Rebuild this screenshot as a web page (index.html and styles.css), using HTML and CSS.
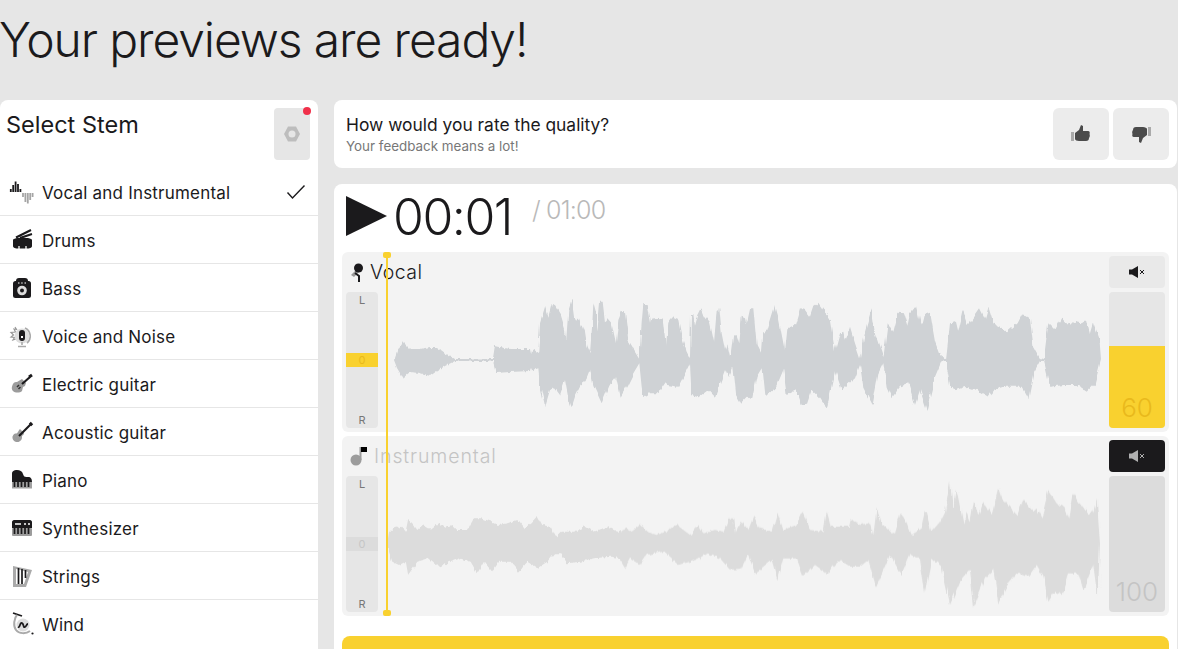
FILE: index.html
```html
<!DOCTYPE html>
<html lang="en">
<head>
    <meta charset="UTF-8">
    <meta name="viewport" content="width=device-width, initial-scale=1.0">
    <title>Your previews are ready!</title>
    <link rel="stylesheet" href="styles.css">
</head>
<body>
    <h1>Your previews are ready!</h1>

    <div class="layout">
        <div class="sidebar">
            <div class="sidebar-head">
                <h2>Select Stem</h2>
                <button class="nut-btn">
                    <svg width="18" height="18" viewBox="0 0 18 18"><path d="M5 1.500h8l4 7.500-4 7.500h-8l-4-7.500z" fill="#bdbdbd"/><circle cx="9" cy="9" r="3.500" fill="#e6e6e6"/></svg>
                    <span class="dot"></span>
                </button>
            </div>

            <ul class="stems">
                <li>
                    <svg class="stem-icon" viewBox="0 0 26 26"><path d="M2.800 13v-3M5.200 13V6M7.600 13V2.500M10 13V5M12.400 13v-3" stroke="#1b1a1c" stroke-width="1.800"/><path d="M15 14v4M17.400 14v9M19.800 14v10.500M22.200 14v7M24.600 14v4" stroke="#a5a5a5" stroke-width="1.800"/></svg>
                    <span>Vocal and Instrumental</span>
                    <svg class="check" width="20" height="16" viewBox="0 0 20 16"><path d="M1.500 8.500l5 5.500L18.500 1.500" fill="none" stroke="#1b1a1c" stroke-width="1.400"/></svg>
                </li>
                <li>
                    <svg class="stem-icon" viewBox="0 0 26 26"><path d="M5 13c0-3 19-3 19 0v6c0 2-3 2.500-5 2.500V19h-2v2.500h-5V19h-2v2.500c-2 0-5-.5-5-2.500z" fill="#1b1a1c"/><path d="M8 10.500L23 3M12 11L24 7" stroke="#1b1a1c" stroke-width="2"/><path d="M10 21.500V19h2v2.500zM17 21.500V19h2v2.500z" fill="#aaa"/></svg>
                    <span>Drums</span>
                </li>
                <li>
                    <svg class="stem-icon" viewBox="0 0 26 26"><rect x="5" y="6" width="18" height="17" rx="2.500" fill="#1b1a1c"/><path d="M8 6c0-2 1-3 3-3h6c2 0 3 1 3 3z" fill="#1b1a1c"/><path d="M10 8h1.500M13.200 8h1.500M16.500 8h1.500" stroke="#fff" stroke-width="1"/><circle cx="14" cy="15.500" r="4.800" fill="#ddd"/><circle cx="14" cy="15.500" r="2" fill="#1b1a1c"/></svg>
                    <span>Bass</span>
                </li>
                <li>
                    <svg class="stem-icon" viewBox="0 0 26 26"><path d="M7 4l1.500 2.500L6 6l1.500 3L3 9.500l2.500 2.500L3 14l3.500.500L5 17l3-1" fill="none" stroke="#999" stroke-width="1.200"/><path d="M17 5a9 9 0 0 1 2 15" fill="none" stroke="#aaa" stroke-width="1.800"/><circle cx="14" cy="13" r="7.500" fill="#dedede"/><rect x="11" y="7" width="6" height="11" rx="3" fill="#1b1a1c"/><rect x="13" y="13" width="2" height="2" fill="#fff"/><path d="M14 19v3M10 23.500h8" stroke="#aaa" stroke-width="1.600"/></svg>
                    <span>Voice and Noise</span>
                </li>
                <li>
                    <svg class="stem-icon" viewBox="0 0 26 26"><path d="M14 8l4 4-1 3-2 1-1 4c-2 2-7 2-9 0s-1-5 0-7 3-2 4-2z" fill="#9c9c9c"/><path d="M14 13L22 6" stroke="#1b1a1c" stroke-width="2.200"/><path d="M21 6l3-2" stroke="#1b1a1c" stroke-width="3"/><path d="M9 16l2-2M10.500 18l2-2" stroke="#333" stroke-width="1.500"/></svg>
                    <span>Electric guitar</span>
                </li>
                <li>
                    <svg class="stem-icon" viewBox="0 0 26 26"><path d="M12 10l4 4c0 2-1.500 2-2 3 .500 3-1 5-3.500 6-3.500.500-6.500-2-6-5.500 1-2.500 2-3 4-3 2-1 2-3.500 3.500-4.500z" fill="#9c9c9c"/><path d="M11 17L23 5" stroke="#1b1a1c" stroke-width="2.200"/><path d="M22 6l2-2" stroke="#1b1a1c" stroke-width="3.400"/></svg>
                    <span>Acoustic guitar</span>
                </li>
                <li>
                    <svg class="stem-icon" viewBox="0 0 26 26"><path d="M4 15V7c0-3 2-4 5-4s5 1 6 4 2 3 5 3 4 2 4 5z" fill="#1b1a1c"/><rect x="4" y="15" width="20" height="6.500" fill="#a0a0a0"/><path d="M6.500 15v5M10 15v5M13.500 15v5M17 15v5M20.500 15v5" stroke="#1b1a1c" stroke-width="1.700"/></svg>
                    <span>Piano</span>
                </li>
                <li>
                    <svg class="stem-icon" viewBox="0 0 26 26"><path d="M4 7c0-1 1-2 2-2h16c1 0 2 1 2 2v6H4z" fill="#1b1a1c"/><path d="M7 9h6M16 9h2M20 9h2" stroke="#fff" stroke-width="1.400"/><rect x="4" y="13" width="20" height="8" rx="1" fill="#9c9c9c"/><path d="M6.500 13v6M10 13v6M13.500 13v6M17 13v6M20.500 13v6" stroke="#1b1a1c" stroke-width="1.700"/></svg>
                    <span>Synthesizer</span>
                </li>
                <li>
                    <svg class="stem-icon" viewBox="0 0 26 26"><path d="M5 3l19 4-6 17H5zM8 6v15h8l4-12z" fill="#aaa" fill-rule="evenodd"/><path d="M10.500 5v16M14 6v15M17.500 7v8" stroke="#1b1a1c" stroke-width="1.700"/></svg>
                    <span>Strings</span>
                </li>
                <li>
                    <svg class="stem-icon" viewBox="0 0 26 26"><path d="M5 2l9 3" stroke="#1b1a1c" stroke-width="1.800"/><path d="M9 4c-3 3-4 11-1 15s10 4 14 1" fill="none" stroke="#aaa" stroke-width="2"/><circle cx="15" cy="14" r="6.500" fill="#ddd"/><path d="M10 16c2 1 2-5 4-4s1 5 3 4 1-3 3-3" fill="none" stroke="#1b1a1c" stroke-width="1.800"/><circle cx="24.500" cy="22.500" r="1.100" fill="#1b1a1c"/></svg>
                    <span>Wind</span>
                </li>
            </ul>
        </div>

        <div class="main">
            <div class="rating card">
                <div class="rating-text">
                    <p class="rating-title">How would you rate the quality?</p>
                    <p class="rating-sub">Your feedback means a lot!</p>
                </div>
                <button class="thumb-btn">
                    <svg width="20" height="18" viewBox="0 0 20 18"><rect x="0" y="7" width="3" height="9" fill="#aaa"/><path d="M4 8l4-3 2-5 2 1v5h5c2 0 2 2 1.500 3 .500 1 .500 3-.500 4 0 2-1 3-3 3H8c-2 0-4-1-4-2z" fill="#4b4b4b"/></svg>
                </button>
                <button class="thumb-btn">
                    <svg class="flip" width="20" height="18" viewBox="0 0 20 18"><rect x="0" y="7" width="3" height="9" fill="#aaa"/><path d="M4 8l4-3 2-5 2 1v5h5c2 0 2 2 1.500 3 .500 1 .500 3-.500 4 0 2-1 3-3 3H8c-2 0-4-1-4-2z" fill="#4b4b4b"/></svg>
                </button>
            </div>

            <div class="player card">
                <div class="transport">
                    <svg width="41" height="40" viewBox="0 0 41 40"><path d="M0 0l41 20L0 40z" fill="#1b1a1c"/></svg>
                    <span class="time">00:01</span>
                    <span class="total">/ 01:00</span>
                </div>

                <div class="tracks">
                    <div class="track">
                        <div class="track-title">
                            <svg width="16" height="20" viewBox="0 0 16 20"><path d="M1 13l5-5 3 2-5 5z" fill="#999"/><circle cx="8.500" cy="6" r="4.500" fill="#1b1a1c"/><path d="M5 11l4 3v6" fill="none" stroke="#1b1a1c" stroke-width="2"/></svg>
                            <span>Vocal</span>
                        </div>
                        <button class="mute-btn">
                            <svg width="16" height="12" viewBox="0 0 16 12"><path d="M0 3.500h3L9 0v12L3 8.500H0z" fill="#1b1a1c"/><path d="M11 4l4 4M15 4l-4 4" stroke="#1b1a1c" stroke-width="1"/></svg>
                        </button>
                        <div class="pan">
                            <span>L</span>
                            <span class="pan-zero">0</span>
                            <span>R</span>
                        </div>
                        <svg class="wave" width="731" height="136" viewBox="378 292 731 136">
                            <defs>
                                <filter id="rough" x="-2%" y="-5%" width="104%" height="110%">
                                    <feTurbulence type="fractalNoise" baseFrequency="0.35 0.03" numOctaves="2" seed="4"/>
                                    <feDisplacementMap in="SourceGraphic" scale="5" xChannelSelector="G" yChannelSelector="R"/>
                                </filter>
                            </defs>
                            <path d="M456 360H493M938 360H950M1038 360H1048" stroke="#cfd2d5" stroke-width="1"/>
                            <g fill="#cfd2d5" filter="url(#rough)">
                                <path d="M394 360L397 351 403 342 410 349 420 349 430 347 437 347 445 353 455 359 493 359 495 346 510 349 530 349 532 360 530 371 510 372 496 373 493 361 455 361 445 366 437 371 430 376 420 373 410 372 403 378 397 368Z"/>
                                <path transform="translate(530 290) scale(.3333)" d="M0 190L10 180 25 190 30 100 45 50 55 80 65 42 75 45 90 70 105 120 108 155 115 60 125 28 132 80 140 95 150 85 165 125 172 170 180 190 187 100 190 40 198 70 202 125 210 35 218 35 225 95 232 85 245 100 258 160 265 90 275 65 285 70 295 150 310 175 328 205 335 100 340 42 350 42 360 95 372 80 385 85 398 82 408 170 415 95 425 82 445 90 455 140 470 185 480 205 483 75 490 75 495 110 505 75 515 55 525 80 540 100 552 155 560 60 568 55 575 130 585 180 592 160 600 195 605 195 612 140 620 135 628 160 635 80 645 85 650 100 660 55 670 55 680 165 695 195 700 130 712 120 735 45 745 80 765 185 772 115 795 105 810 55 825 60 840 80 850 50 865 38 880 60 900 90 900 310 890 355 870 325 845 300 830 345 815 345 800 300 770 315 760 240 735 300 703 315 695 235 680 260 665 330 650 320 632 340 615 310 607 230 595 260 585 240 555 320 535 300 505 322 485 315 480 220 470 240 445 290 412 285 405 280 385 310 360 310 340 322 335 290 328 220 310 250 290 290 272 320 258 260 235 290 215 340 190 285 180 235 170 260 150 290 135 320 125 352 115 325 105 270 90 315 75 295 60 300 45 350 30 285 25 235 10 240 0 235Z"/>
                                <path transform="translate(820 290) scale(.3333)" d="M0 65L10 60 30 90 45 185 60 130 70 125 75 150 90 110 105 160 120 205 135 125 155 55 165 130 190 205 203 100 220 125 235 68 250 70 262 110 270 70 288 48 298 90 305 105 312 75 330 68 345 155 360 195 378 208 390 100 408 95 415 125 430 60 445 105 480 55 495 85 505 50 520 100 540 110 560 125 590 100 605 70 630 85 640 170 660 205 672 208 685 100 705 120 725 85 745 105 765 95 785 100 800 90 810 130 820 95 838 145 843 210 825 280 800 305 770 285 735 285 690 290 672 213 660 213 640 250 625 325 605 290 590 290 550 290 520 300 505 320 470 300 440 290 410 300 390 290 378 213 365 213 345 260 320 360 300 300 285 345 265 280 240 290 215 325 200 290 190 220 175 250 158 345 130 290 120 225 105 265 65 300 45 240 20 355 0 320Z"/>
                            </g>
                        </svg>
                        <div class="vol">
                            <div class="vol-fill vol-on">60</div>
                        </div>
                    </div>

                    <div class="track track-muted">
                        <div class="track-title">
                            <svg width="18" height="20" viewBox="0 0 18 20"><circle cx="6" cy="14" r="5.500" fill="#9c9c9c"/><rect x="9.500" y="1" width="2" height="13" fill="#9c9c9c"/><path d="M11 1h6v5h-6z" fill="#000"/></svg>
                            <span>Instrumental</span>
                        </div>
                        <button class="mute-btn">
                            <svg width="16" height="12" viewBox="0 0 16 12"><path d="M0 3.500h3L9 0v12L3 8.500H0z" fill="#b0b0b0"/><path d="M11 4l4 4M15 4l-4 4" stroke="#b0b0b0" stroke-width="1"/></svg>
                        </button>
                        <div class="pan">
                            <span>L</span>
                            <span class="pan-zero">0</span>
                            <span>R</span>
                        </div>
                        <svg class="wave" width="731" height="136" viewBox="378 476 731 136">
                            <g fill="#dcdcdc" filter="url(#rough)">
                                <path transform="translate(334 430) scale(.3333)" d="M160 340L165 310 180 295 205 290 215 305 222 270 235 280 250 300 265 285 290 300 315 280 335 290 355 285 370 300 400 300 420 265 440 265 470 275 490 285 520 280 550 270 570 295 590 280 610 258 625 285 650 290 665 320 680 305 720 305 755 290 780 305 820 290 850 305 862 300 862 385 830 380 780 385 740 395 700 400 680 370 660 370 640 395 610 415 580 395 555 425 530 395 495 395 475 425 450 395 430 430 410 395 380 385 350 395 315 410 285 385 250 395 222 435 215 395 195 405 175 395 160 350Z"/>
                                <path transform="translate(620 480) scale(.3333)" d="M0 155L20 145 35 155 60 135 80 155 110 165 130 158 170 135 210 165 235 135 250 160 285 150 310 155 325 115 340 115 345 160 365 125 385 150 400 110 420 145 455 155 472 95 490 150 530 135 548 95 570 150 610 155 620 95 632 140 690 140 695 120 720 135 745 130 760 165 770 85 785 130 810 155 825 160 842 100 860 125 875 165 905 145 917 95 935 155 960 125 975 95 990 5 1000 90 1010 30 1030 130 1040 95 1050 125 1062 65 1075 105 1090 65 1115 105 1135 25 1145 55 1170 80 1190 105 1210 60 1240 95 1250 85 1265 115 1285 30 1310 70 1330 80 1345 115 1358 40 1385 80 1405 105 1420 95 1430 55 1440 190 1440 195 1433 355 1420 255 1390 330 1375 280 1345 280 1325 345 1305 335 1285 365 1270 290 1250 255 1225 290 1190 280 1165 310 1135 370 1120 270 1095 295 1062 380 1050 270 1020 305 990 375 965 260 935 235 915 335 900 235 870 225 845 285 810 225 790 270 768 320 745 240 720 260 690 260 660 240 620 280 585 255 550 290 530 235 490 235 472 300 455 240 405 280 385 225 365 265 330 270 300 235 260 220 230 240 175 255 130 215 80 225 60 255 30 235 15 265 0 240Z"/>
                            </g>
                        </svg>
                        <div class="vol">
                            <div class="vol-fill vol-off">100</div>
                        </div>
                    </div>

                    <div class="playhead"></div>
                </div>

                <button class="download"></button>
            </div>
        </div>
    </div>
</body>
</html>
```

FILE: styles.css
```css
html, body {
    height: 100%;
    overflow: hidden;
}
body {
    margin: 0;
    font-family: Inter, "Liberation Sans", sans-serif;
    background-color: #e6e6e6;
    color: #1b1a1c;
}
h1 {
    margin: 0 0 0 -1px;
    height: 100px;
    padding-top: 12px;
    box-sizing: border-box;
    font-size: 48px;
    line-height: 56px;
    font-weight: 300;
    letter-spacing: -1.1px;
}
p {
    margin: 0;
}
button {
    border: none;
    padding: 0;
    display: flex;
    align-items: center;
    justify-content: center;
}
.layout {
    display: flex;
    gap: 16px;
    align-items: flex-start;
}
.sidebar {
    width: 318px;
    min-height: 600px;
    flex-shrink: 0;
    background-color: white;
    border-radius: 8px 8px 0 0;
}
.sidebar-head {
    height: 68px;
    padding: 8px 8px 0 6px;
    box-sizing: border-box;
    display: flex;
    justify-content: space-between;
}
.sidebar-head h2 {
    margin: 0;
    font-size: 23.500px;
    font-weight: 400;
    line-height: 34px;
}
.nut-btn {
    position: relative;
    width: 36px;
    height: 52px;
    background-color: #e6e6e6;
    border-radius: 4px;
}
.dot {
    position: absolute;
    top: -1px;
    right: -1px;
    width: 8px;
    height: 8px;
    border-radius: 50%;
    background-color: #f0304a;
}
.stems {
    list-style: none;
    margin: 0;
    padding: 0;
}
.stems li {
    height: 48px;
    box-sizing: border-box;
    border-bottom: 1px solid #e6e6e6;
    padding: 0 12px 0 8px;
    display: flex;
    align-items: center;
    gap: 8px;
    font-size: 17px;
    letter-spacing: .2px;
}
.stems li:last-child {
    border-bottom: none;
}
.stems li span {
    padding-top: 2px;
}
.stem-icon {
    width: 26px;
    height: 26px;
    flex-shrink: 0;
}
.check {
    margin-left: auto;
}
.main {
    flex: 1;
    margin-right: 1px;
    display: flex;
    flex-direction: column;
    gap: 16px;
}
.card {
    background-color: white;
    border-radius: 8px;
}
.rating {
    height: 68px;
    padding: 8px;
    box-sizing: border-box;
    display: flex;
    align-items: center;
    gap: 4px;
}
.rating-text {
    flex: 1;
    padding-left: 4px;
}
.rating-title {
    font-size: 17.400px;
    line-height: 22px;
}
.rating-sub {
    margin-top: 2px;
    font-size: 13.400px;
    line-height: 16px;
    color: #777;
}
.thumb-btn {
    width: 56px;
    height: 52px;
    background-color: #ececec;
    border-radius: 6px;
}
.flip {
    transform: rotate(180deg);
}
.player {
    padding: 12px 8px 0;
    height: 500px;
}
.transport {
    height: 56px;
    padding-left: 4px;
    box-sizing: border-box;
    display: flex;
    align-items: flex-start;
    gap: 6px;
}
.time {
    font-size: 50px;
    font-weight: 300;
    line-height: 42px;
    letter-spacing: -1.500px;
}
.total {
    margin-left: 14px;
    font-size: 25px;
    font-weight: 300;
    line-height: 28px;
    letter-spacing: -.8px;
    color: #b9b9b9;
}
.tracks {
    position: relative;
    display: flex;
    flex-direction: column;
    gap: 4px;
}
.track {
    height: 180px;
    padding: 4px;
    box-sizing: border-box;
    background-color: #f3f3f3;
    border-radius: 6px;
    display: grid;
    grid-template-columns: 32px 1fr 56px;
    grid-template-rows: 32px 136px;
    row-gap: 4px;
}
.track-title {
    grid-column: 1 / 3;
    padding-left: 4px;
    display: flex;
    align-items: center;
    gap: 4px;
    font-size: 19.500px;
    font-weight: 300;
    letter-spacing: .5px;
}
.track-muted .track-title {
    color: #c4c4c4;
    gap: 6px;
    letter-spacing: .9px;
}
.mute-btn {
    background-color: #e9e9e9;
    border-radius: 4px;
}
.track-muted .mute-btn {
    background-color: #1b1a1c;
}
.pan {
    background-color: #e6e6e6;
    border-radius: 4px;
    display: flex;
    flex-direction: column;
    justify-content: space-between;
    align-items: center;
    font-size: 11px;
    line-height: 16px;
    color: #777;
}
.pan-zero {
    width: 100%;
    height: 14px;
    line-height: 14px;
    text-align: center;
    background-color: #f9d12f;
    color: #e9b91c;
}
.track-muted .pan-zero {
    background-color: #dcdcdc;
    color: #c6c6c6;
}
.wave {
    display: block;
}
.vol {
    background-color: #e6e6e6;
    border-radius: 4px;
    overflow: hidden;
    display: flex;
    align-items: flex-end;
}
.vol-fill {
    width: 100%;
    box-sizing: border-box;
    padding-bottom: 5px;
    display: flex;
    align-items: flex-end;
    justify-content: center;
    font-size: 26px;
    font-weight: 300;
    line-height: 30px;
}
.vol-on {
    height: 60%;
    background-color: #f9d12f;
    color: #e9b91c;
}
.vol-off {
    height: 100%;
    background-color: #dcdcdc;
    color: #c4c4c4;
}
.playhead {
    position: absolute;
    top: 0;
    bottom: 0;
    left: 44px;
    width: 2px;
    background-color: #f9d12f;
}
.playhead::before,
.playhead::after {
    content: "";
    position: absolute;
    left: -3px;
    width: 8px;
    height: 6px;
    border-radius: 2px;
    background-color: #f9d12f;
}
.playhead::before {
    top: 0;
}
.playhead::after {
    bottom: 0;
}
.download {
    width: 100%;
    height: 56px;
    margin-top: 20px;
    background-color: #f9d12f;
    border-radius: 8px;
}
```
